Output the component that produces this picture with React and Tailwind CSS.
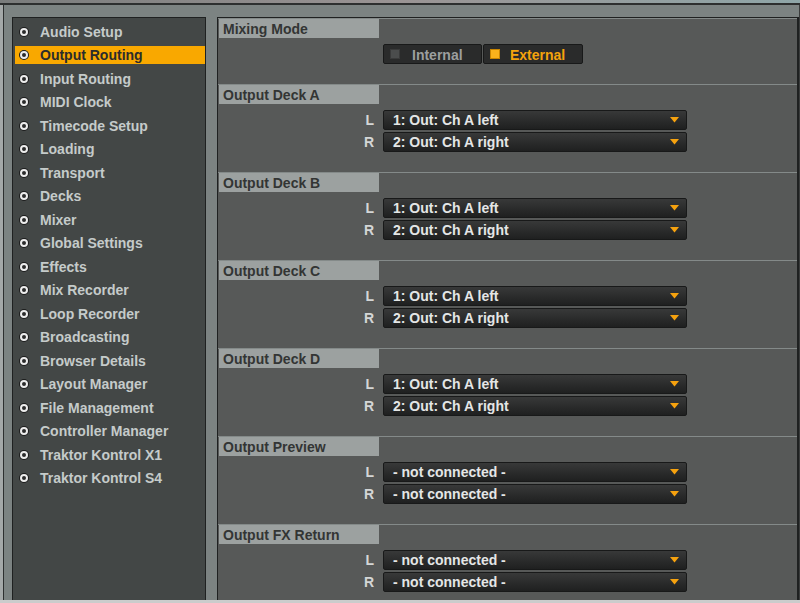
import React from 'react';

const menuItems = [
  'Audio Setup',
  'Output Routing',
  'Input Routing',
  'MIDI Clock',
  'Timecode Setup',
  'Loading',
  'Transport',
  'Decks',
  'Mixer',
  'Global Settings',
  'Effects',
  'Mix Recorder',
  'Loop Recorder',
  'Broadcasting',
  'Browser Details',
  'Layout Manager',
  'File Management',
  'Controller Manager',
  'Traktor Kontrol X1',
  'Traktor Kontrol S4',
];

const outputs = [
  { title: 'Output Deck A', left: '1: Out: Ch A left', right: '2: Out: Ch A right' },
  { title: 'Output Deck B', left: '1: Out: Ch A left', right: '2: Out: Ch A right' },
  { title: 'Output Deck C', left: '1: Out: Ch A left', right: '2: Out: Ch A right' },
  { title: 'Output Deck D', left: '1: Out: Ch A left', right: '2: Out: Ch A right' },
  { title: 'Output Preview', left: '- not connected -', right: '- not connected -' },
  { title: 'Output FX Return', left: '- not connected -', right: '- not connected -' },
];

function Radio() {
  return (
    <span className="w-[10px] h-[10px] rounded-full bg-[#1c1d1d] flex items-center justify-center shrink-0">
      <span className="w-[8px] h-[8px] rounded-full border-2 border-[#ececec] bg-[#2a2b2b]" />
    </span>
  );
}

function SectionHeader({ title }) {
  return (
    <div className="border-t border-[#848a89]">
      <div className="ml-[1px] w-[160px] h-[19px] bg-[#9ca1a0] flex items-center pl-[4px] text-[#333534]">
        {title}
      </div>
    </div>
  );
}

function Dropdown({ label, value }) {
  return (
    <div className="flex items-center">
      <div className="w-[165px] text-right pr-[9px] text-[#d4d6d6]">{label}</div>
      <div className="w-[304px] h-[20px] rounded-[2px] border border-[#181919] bg-linear-to-b from-[#383939] to-[#1f2020] flex items-center justify-between pl-[9px] pr-[7px] text-[#e4e6e6]">
        <span>{value}</span>
        <svg width="9" height="6" viewBox="0 0 9 6">
          <path d="M0 0H9L4.5 5.5Z" fill="#f6a20e" />
        </svg>
      </div>
    </div>
  );
}

export default function App() {
  return (
    <div className="w-[800px] h-[603px] bg-[#7c8382] flex flex-col overflow-hidden font-['Liberation_Sans',Arial,sans-serif] text-[14px] font-bold leading-none">
      {/* window top edge */}
      <div className="h-[3px] bg-linear-to-r from-[#7a7c7c] via-[#9a9494] to-[#8fa6a8]" />
      <div className="h-[2px] bg-[#2d2f2f]" />

      <div className="flex-1 flex min-h-0">
        <div className="w-[3px] bg-[#a4a8a8]" />
        <div className="w-[1px] bg-[#2d2f2f]" />

        <div className="flex-1 flex pt-[12px] pl-[8px] min-h-0">
          {/* Sidebar */}
          <div className="w-[194px] border border-b-0 border-[#1f2121] bg-[#434746] pt-[2px]">
            {menuItems.map((item) => {
              const active = item === 'Output Routing';
              return (
                <div key={item} className="h-[23.5px] flex items-center">
                  <div
                    className={`ml-[2px] flex-1 h-[18px] flex items-center pl-[4px] gap-[11px] ${
                      active ? 'bg-[#f9a800] text-[#2b2c2c]' : 'text-[#c5cbca]'
                    }`}
                  >
                    <Radio />
                    <span>{item}</span>
                  </div>
                </div>
              );
            })}
          </div>

          {/* Settings panel */}
          <div className="ml-[11px] flex-1 border border-b-0 border-r-2 border-[#1f2121] bg-[#575958] overflow-hidden">
            <div className="h-[66px]">
              <SectionHeader title="Mixing Mode" />
              <div className="mt-[6px] ml-[165px] flex gap-[1px]">
                <div className="w-[99px] h-[20px] rounded-[2px] border border-[#181919] bg-[#2a2b2b] flex items-center pl-[6px] gap-[12px] text-[#9c9f9f]">
                  <span className="w-[10px] h-[10px] bg-[#4b4d4d] border border-[#3a3b3b]" />
                  <span className="pt-[1px]">Internal</span>
                </div>
                <div className="w-[100px] h-[20px] rounded-[2px] border border-[#181919] bg-[#2a2b2b] flex items-center pl-[6px] gap-[10px] text-[#f5a30c]">
                  <span className="w-[10px] h-[10px] bg-[#f9b21c] border border-[#c98500]" />
                  <span className="pt-[1px]">External</span>
                </div>
              </div>
            </div>

            {outputs.map((o) => (
              <div key={o.title} className="h-[88px]">
                <SectionHeader title={o.title} />
                <div className="mt-[6px] flex flex-col gap-[2px]">
                  <Dropdown label="L" value={o.left} />
                  <Dropdown label="R" value={o.right} />
                </div>
              </div>
            ))}
          </div>
        </div>

        <div className="w-[1px] bg-[#3a3c3c]" />
      </div>

      <div className="h-[3px] bg-[#cbcccc]" />
    </div>
  );
}
